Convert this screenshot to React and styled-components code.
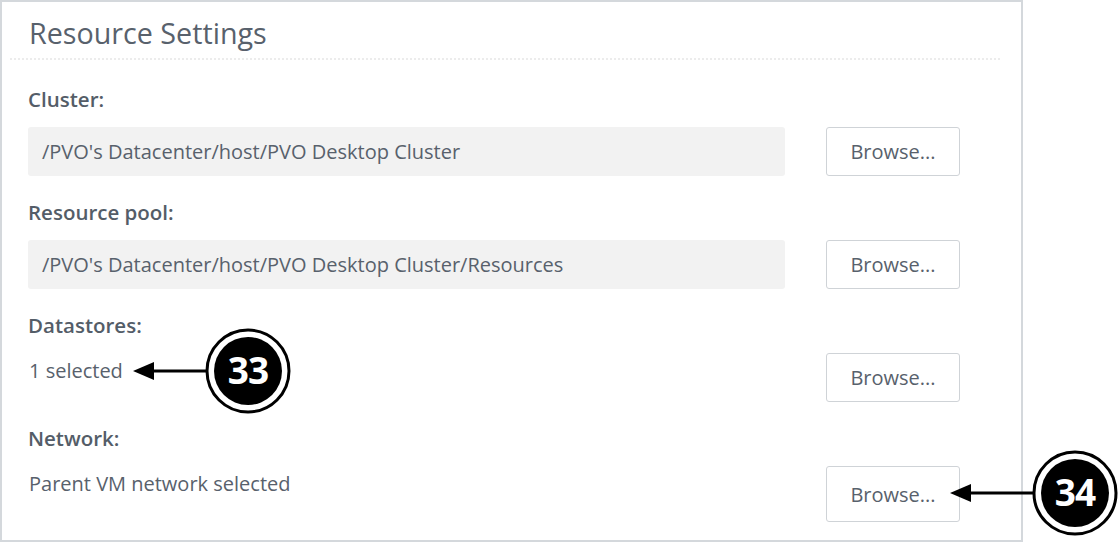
import styled, { createGlobalStyle } from "styled-components";

const GlobalStyle = createGlobalStyle`
  html, body {
    margin: 0;
    padding: 0;
    background: #ffffff;
  }
  body {
    font-family: "Open Sans", "Liberation Sans", sans-serif;
    color: #535c68;
  }
`;

const Page = styled.div`
  position: relative;
  width: 1119px;
  height: 542px;
  overflow: hidden;
`;

const Panel = styled.section`
  box-sizing: border-box;
  width: 1023px;
  height: 542px;
  border: 2px solid #d4d8dc;
  padding: 0 8px;
`;

const Header = styled.div`
  border-bottom: 2px dotted #ececec;
  padding: 16px 0 10px 19px;
  margin-right: 13px;
`;

const Title = styled.h2`
  margin: 0;
  font-size: 28.7px;
  font-weight: 400;
  line-height: 30px;
  color: #58616c;
`;

const Fields = styled.div`
  display: flex;
  flex-direction: column;
  gap: 24px;
  padding: 27px 0 0 18px;
`;

const Field = styled.div`
  display: flex;
  flex-direction: column;
  gap: 16px;
`;

const Label = styled.div`
  font-size: 20.5px;
  font-weight: 600;
  line-height: 24px;
  color: #545d68;
`;

const Row = styled.div`
  display: grid;
  grid-template-columns: 757px 134px;
  column-gap: 41px;
  align-items: start;
`;

const Value = styled.div`
  box-sizing: border-box;
  height: 49px;
  display: flex;
  align-items: ${(p) => (p.$boxed ? "center" : "flex-start")};
  padding: ${(p) => (p.$boxed ? "0 0 0 14px" : "6px 0 0 1px")};
  line-height: 24px;
  background: ${(p) => (p.$boxed ? "#f2f2f2" : "transparent")};
  border-radius: 3px;
  font-size: 20px;
  color: #58616c;
  white-space: nowrap;
`;

const BrowseButton = styled.button`
  box-sizing: border-box;
  height: ${(p) => (p.$tall ? "56px" : "49px")};
  background: #ffffff;
  border: 1.5px solid #cfd3d7;
  border-radius: 3px;
  font-family: "Open Sans", "Liberation Sans", sans-serif;
  font-size: 20px;
  color: #58616c;
  cursor: pointer;
`;

const Callout = styled.svg`
  position: absolute;
  overflow: visible;
`;

const CalloutMarker = ({ left, top, lineFrom, label }) => (
  <Callout
    width="88"
    height="88"
    viewBox="0 0 88 88"
    style={{ left, top }}
  >
    <line x1={lineFrom + 16} y1="44" x2="2" y2="44" stroke="#000" strokeWidth="3" />
    <polygon points={`${lineFrom},44 ${lineFrom + 21},35 ${lineFrom + 21},53`} fill="#000" />
    <circle cx="44" cy="44" r="41" fill="#fff" stroke="#000" strokeWidth="3" />
    <circle cx="44" cy="44" r="34" fill="#000" />
    <text
      x="44"
      y="57"
      textAnchor="middle"
      fill="#fff"
      fontFamily="'Open Sans', 'Liberation Sans', sans-serif"
      fontWeight="700"
      fontSize="37"
      letterSpacing="-1"
    >
      {label}
    </text>
  </Callout>
);

const fields = [
  { label: "Cluster:", value: "/PVO's Datacenter/host/PVO Desktop Cluster", boxed: true },
  { label: "Resource pool:", value: "/PVO's Datacenter/host/PVO Desktop Cluster/Resources", boxed: true },
  { label: "Datastores:", value: "1 selected" },
  { label: "Network:", value: "Parent VM network selected", tall: true },
];

export default function App() {
  return (
    <Page>
      <GlobalStyle />
      <Panel>
        <Header>
          <Title>Resource Settings</Title>
        </Header>
        <Fields>
          {fields.map((f) => (
            <Field key={f.label}>
              <Label>{f.label}</Label>
              <Row>
                <Value $boxed={f.boxed}>{f.value}</Value>
                <BrowseButton $tall={f.tall}>Browse...</BrowseButton>
              </Row>
            </Field>
          ))}
        </Fields>
      </Panel>
      <CalloutMarker left={204} top={327} lineFrom={-71} label="33" />
      <CalloutMarker left={1031} top={449} lineFrom={-81} label="34" />
    </Page>
  );
}
